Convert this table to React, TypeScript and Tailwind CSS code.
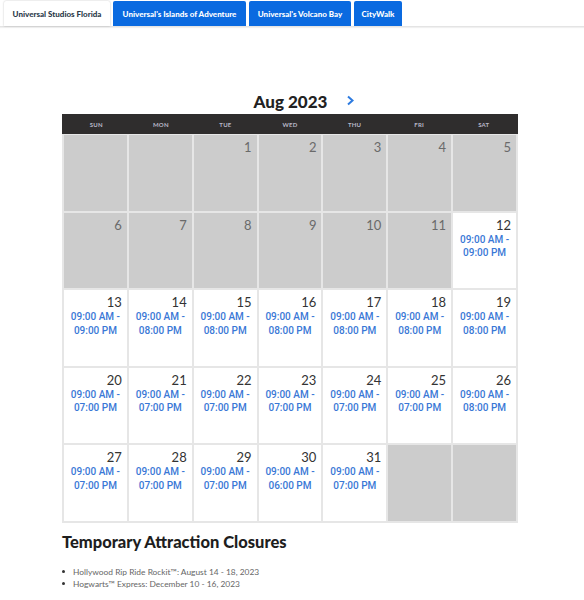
import React from "react";

type Cell = { d?: number; t?: [string, string] };

const cells: Cell[] = [
  {}, {}, { d: 1 }, { d: 2 }, { d: 3 }, { d: 4 }, { d: 5 },
  { d: 6 }, { d: 7 }, { d: 8 }, { d: 9 }, { d: 10 }, { d: 11 }, { d: 12, t: ["09:00 AM -", "09:00 PM"] },
  { d: 13, t: ["09:00 AM -", "09:00 PM"] },
  { d: 14, t: ["09:00 AM -", "08:00 PM"] },
  { d: 15, t: ["09:00 AM -", "08:00 PM"] },
  { d: 16, t: ["09:00 AM -", "08:00 PM"] },
  { d: 17, t: ["09:00 AM -", "08:00 PM"] },
  { d: 18, t: ["09:00 AM -", "08:00 PM"] },
  { d: 19, t: ["09:00 AM -", "08:00 PM"] },
  { d: 20, t: ["09:00 AM -", "07:00 PM"] },
  { d: 21, t: ["09:00 AM -", "07:00 PM"] },
  { d: 22, t: ["09:00 AM -", "07:00 PM"] },
  { d: 23, t: ["09:00 AM -", "07:00 PM"] },
  { d: 24, t: ["09:00 AM -", "07:00 PM"] },
  { d: 25, t: ["09:00 AM -", "07:00 PM"] },
  { d: 26, t: ["09:00 AM -", "08:00 PM"] },
  { d: 27, t: ["09:00 AM -", "07:00 PM"] },
  { d: 28, t: ["09:00 AM -", "07:00 PM"] },
  { d: 29, t: ["09:00 AM -", "07:00 PM"] },
  { d: 30, t: ["09:00 AM -", "06:00 PM"] },
  { d: 31, t: ["09:00 AM -", "07:00 PM"] },
  {}, {},
];

const days = ["SUN", "MON", "TUE", "WED", "THU", "FRI", "SAT"];

export default function App() {
  return (
    <div className="w-[584px] h-[600px] bg-white overflow-hidden font-['Lato',sans-serif]">
      {/* Tabs */}
      <div className="flex items-end gap-[3px] pl-[4px] pt-[2px] h-[27px] border-b border-[#e4e4e4] shadow-[0_1px_1px_rgba(0,0,0,0.06)]">
        <div className="w-[106px] h-[25px] flex items-center justify-center bg-white rounded-t-[2px] shadow-[0_0_2px_rgba(0,0,0,0.25)] text-[8px] font-black text-[#2b3a4a]">
          Universal Studios Florida
        </div>
        <div className="w-[133px] h-[25px] flex items-center justify-center bg-[#0a6ae0] rounded-t-[2px] text-[8px] font-black text-white">
          Universal's Islands of Adventure
        </div>
        <div className="w-[102px] h-[25px] flex items-center justify-center bg-[#0a6ae0] rounded-t-[2px] text-[8px] font-black text-white">
          Universal's Volcano Bay
        </div>
        <div className="w-[48px] h-[25px] flex items-center justify-center bg-[#0a6ae0] rounded-t-[2px] text-[8px] font-black text-white">
          CityWalk
        </div>
      </div>

      {/* Month title */}
      <div className="ml-[62px] w-[456px] mt-[61px] h-[26px] relative flex items-center justify-center">
        <span className="text-[17px] font-black text-[#222] leading-none pl-[1px]">Aug 2023</span>
        <svg className="absolute left-[284px] top-[7px]" width="9" height="11" viewBox="0 0 9 11">
          <path d="M2 1.5 L6.5 5.5 L2 9.5" fill="none" stroke="#2d7be0" strokeWidth="2" />
        </svg>
      </div>

      {/* Calendar */}
      <div className="ml-[62px] w-[456px]">
        <div className="grid grid-cols-7 h-[20px] bg-[#2f2d2d] px-[2px]">
          {days.map((d) => (
            <div key={d} className="flex items-center justify-center text-[6px] font-bold text-[#b8b8c8] tracking-[0.2px]">
              {d}
            </div>
          ))}
        </div>
        <div className="grid grid-cols-7 gap-[2px] p-[2px] pt-[1px] bg-[#e6e6e6]">
          {cells.map((c, i) => {
            const white = !!c.t;
            return (
              <div
                key={i}
                className={`h-[75.5px] flex flex-col ${white ? "bg-white" : "bg-[#cccccc]"}`}
              >
                {c.d !== undefined && (
                  <div
                    className={`text-right pr-[5px] pt-[5px] text-[13px] leading-[15px] ${
                      white ? "text-[#333]" : "text-[#6a6a6a]"
                    }`}
                  >
                    {c.d}
                  </div>
                )}
                {c.t && (
                  <div className="text-center text-[10px] leading-[13.5px] font-medium text-[#3a78d6] font-['Roboto',sans-serif]">
                    <div>{c.t[0]}</div>
                    <div>{c.t[1]}</div>
                  </div>
                )}
              </div>
            );
          })}
        </div>
      </div>

      {/* Closures */}
      <div className="ml-[62px] mt-[9px]">
        <h2 className="text-[16.5px] font-black text-[#1e1e1e] leading-[20px]">Temporary Attraction Closures</h2>
        <ul className="mt-[14px] text-[8.4px] text-[#666] leading-[12px]">
          <li className="flex items-center">
            <span className="w-[3px] h-[3px] bg-[#333] rounded-full mr-[8px]"></span>
            Hollywood Rip Ride Rockit™: August 14 - 18, 2023
          </li>
          <li className="flex items-center">
            <span className="w-[3px] h-[3px] bg-[#333] rounded-full mr-[8px]"></span>
            Hogwarts™ Express: December 10 - 16, 2023
          </li>
        </ul>
      </div>
    </div>
  );
}
